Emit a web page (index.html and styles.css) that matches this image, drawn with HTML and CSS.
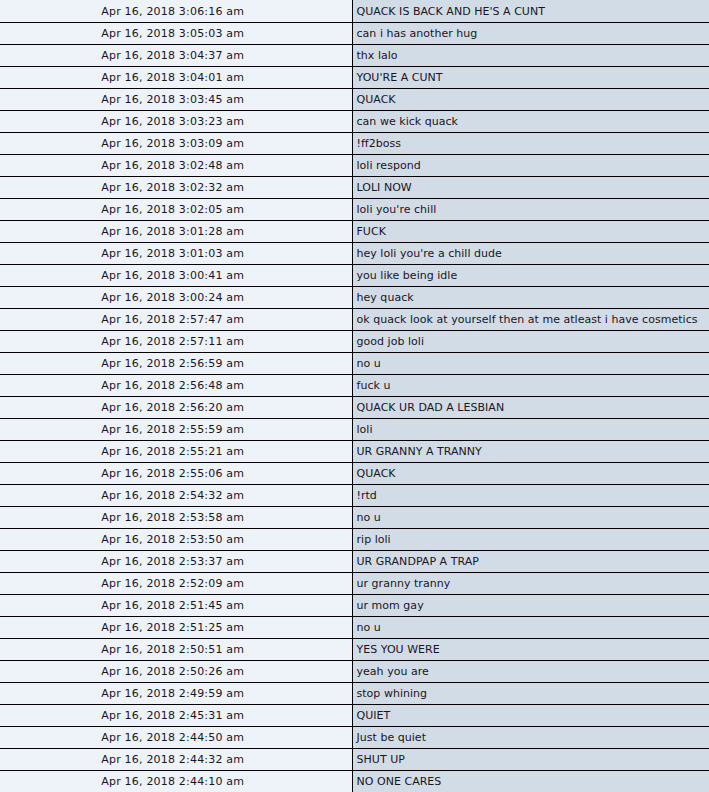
FILE: index.html
```html
<!DOCTYPE html>
<html>
<head>
<meta charset="utf-8">
<link rel="stylesheet" href="styles.css">
</head>
<body>
<table class="log">
<tr><td class="ts">Apr 16, 2018 3:06:16 am</td><td class="msg">QUACK IS BACK AND HE'S A CUNT</td></tr>
<tr><td class="ts">Apr 16, 2018 3:05:03 am</td><td class="msg">can i has another hug</td></tr>
<tr><td class="ts">Apr 16, 2018 3:04:37 am</td><td class="msg">thx lalo</td></tr>
<tr><td class="ts">Apr 16, 2018 3:04:01 am</td><td class="msg">YOU'RE A CUNT</td></tr>
<tr><td class="ts">Apr 16, 2018 3:03:45 am</td><td class="msg">QUACK</td></tr>
<tr><td class="ts">Apr 16, 2018 3:03:23 am</td><td class="msg">can we kick quack</td></tr>
<tr><td class="ts">Apr 16, 2018 3:03:09 am</td><td class="msg">!ff2boss</td></tr>
<tr><td class="ts">Apr 16, 2018 3:02:48 am</td><td class="msg">loli respond</td></tr>
<tr><td class="ts">Apr 16, 2018 3:02:32 am</td><td class="msg">LOLI NOW</td></tr>
<tr><td class="ts">Apr 16, 2018 3:02:05 am</td><td class="msg">loli you're chill</td></tr>
<tr><td class="ts">Apr 16, 2018 3:01:28 am</td><td class="msg">FUCK</td></tr>
<tr><td class="ts">Apr 16, 2018 3:01:03 am</td><td class="msg">hey loli you're a chill dude</td></tr>
<tr><td class="ts">Apr 16, 2018 3:00:41 am</td><td class="msg">you like being idle</td></tr>
<tr><td class="ts">Apr 16, 2018 3:00:24 am</td><td class="msg">hey quack</td></tr>
<tr><td class="ts">Apr 16, 2018 2:57:47 am</td><td class="msg">ok quack look at yourself then at me atleast i have cosmetics</td></tr>
<tr><td class="ts">Apr 16, 2018 2:57:11 am</td><td class="msg">good job loli</td></tr>
<tr><td class="ts">Apr 16, 2018 2:56:59 am</td><td class="msg">no u</td></tr>
<tr><td class="ts">Apr 16, 2018 2:56:48 am</td><td class="msg">fuck u</td></tr>
<tr><td class="ts">Apr 16, 2018 2:56:20 am</td><td class="msg">QUACK UR DAD A LESBIAN</td></tr>
<tr><td class="ts">Apr 16, 2018 2:55:59 am</td><td class="msg">loli</td></tr>
<tr><td class="ts">Apr 16, 2018 2:55:21 am</td><td class="msg">UR GRANNY A TRANNY</td></tr>
<tr><td class="ts">Apr 16, 2018 2:55:06 am</td><td class="msg">QUACK</td></tr>
<tr><td class="ts">Apr 16, 2018 2:54:32 am</td><td class="msg">!rtd</td></tr>
<tr><td class="ts">Apr 16, 2018 2:53:58 am</td><td class="msg">no u</td></tr>
<tr><td class="ts">Apr 16, 2018 2:53:50 am</td><td class="msg">rip loli</td></tr>
<tr><td class="ts">Apr 16, 2018 2:53:37 am</td><td class="msg">UR GRANDPAP A TRAP</td></tr>
<tr><td class="ts">Apr 16, 2018 2:52:09 am</td><td class="msg">ur granny tranny</td></tr>
<tr><td class="ts">Apr 16, 2018 2:51:45 am</td><td class="msg">ur mom gay</td></tr>
<tr><td class="ts">Apr 16, 2018 2:51:25 am</td><td class="msg">no u</td></tr>
<tr><td class="ts">Apr 16, 2018 2:50:51 am</td><td class="msg">YES YOU WERE</td></tr>
<tr><td class="ts">Apr 16, 2018 2:50:26 am</td><td class="msg">yeah you are</td></tr>
<tr><td class="ts">Apr 16, 2018 2:49:59 am</td><td class="msg">stop whining</td></tr>
<tr><td class="ts">Apr 16, 2018 2:45:31 am</td><td class="msg">QUIET</td></tr>
<tr><td class="ts">Apr 16, 2018 2:44:50 am</td><td class="msg">Just be quiet</td></tr>
<tr><td class="ts">Apr 16, 2018 2:44:32 am</td><td class="msg">SHUT UP</td></tr>
<tr><td class="ts">Apr 16, 2018 2:44:10 am</td><td class="msg">NO ONE CARES</td></tr>
</table>
</body>
</html>
```

FILE: styles.css
```css
html, body {
  margin: 0;
  padding: 0;
  background: #d2dce6;
}
.log {
  border-collapse: collapse;
  width: 709px;
  table-layout: fixed;
  font-family: "DejaVu Sans", Verdana, sans-serif;
  font-size: 11px;
  color: #1a1424;
}
.log td {
  height: 22px;
  padding: 1px 0 0 0;
  box-sizing: border-box;
  border-bottom: 1px solid #000;
  white-space: nowrap;
  overflow: hidden;
  vertical-align: middle;
}
.log .ts {
  width: 352px;
  background: #eef3fa;
  text-align: center;
  padding-right: 6px;
  letter-spacing: 0.2px;
  border-right: 1px solid #000;
}
.log .msg {
  background: #d2dce6;
  padding-left: 4px;
  letter-spacing: 0.03px;
}
```
